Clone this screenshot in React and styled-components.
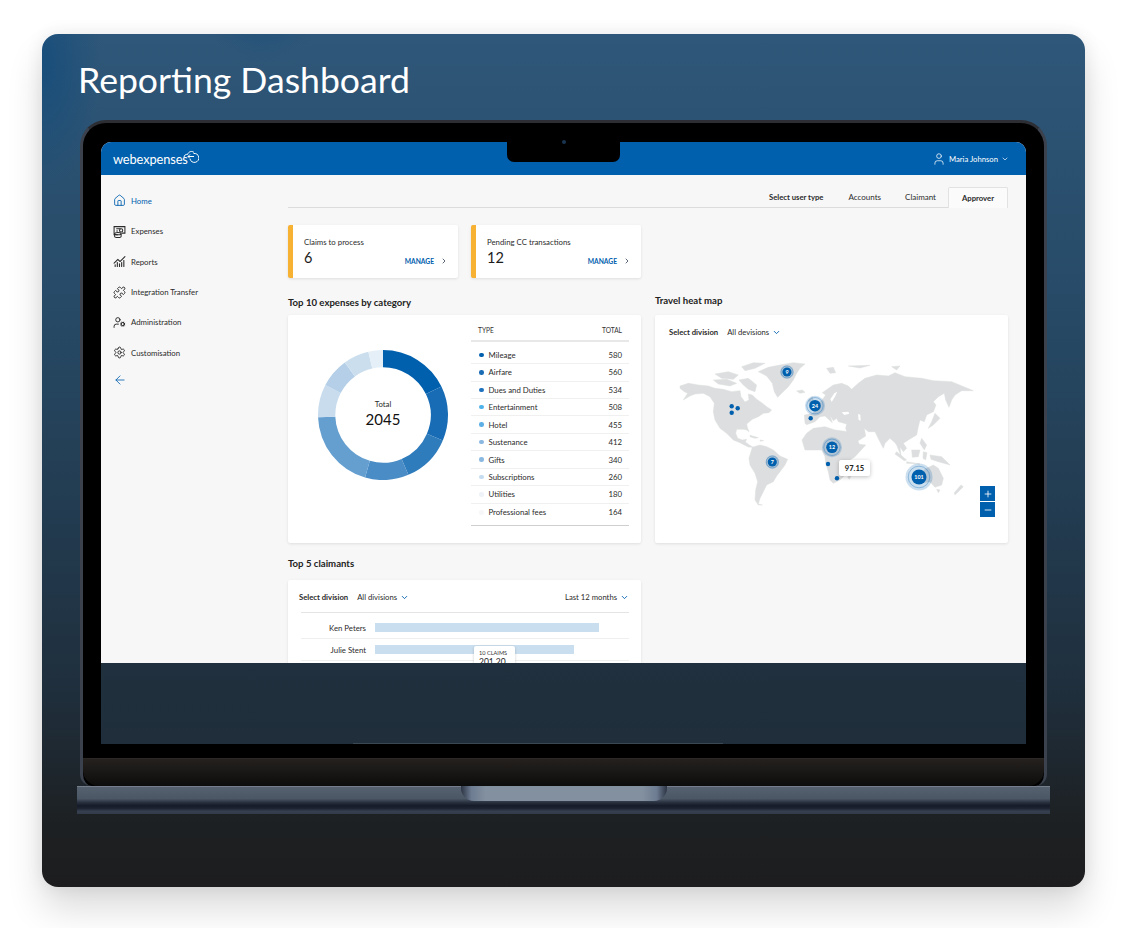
import React from "react";
import styled, { createGlobalStyle } from "styled-components";
import { House, Puzzle, UserCog, Settings, ChartNoAxesCombined, ArrowLeft, User, ChevronDown, ChevronRight, Plus, Minus } from "lucide-react";

const Global = createGlobalStyle`
  html, body { margin: 0; padding: 0; background: #fff; }
  body { font-family: "Lato", "Liberation Sans", sans-serif; color: #1c1c1c; }
  * { box-sizing: border-box; }
`;

const Page = styled.div`
  width: 1126px;
  height: 928px;
  padding: 34px 41px 0 42px;
  overflow: hidden;
`;
const Card = styled.section`
  width: 1043px;
  height: 853px;
  border-radius: 16px;
  padding: 25px 0 0 35px;
  background:
    radial-gradient(circle 60px at 220px -30px, rgba(20, 75, 125, 0.55), rgba(20, 75, 125, 0) 100%),
    radial-gradient(ellipse 60px 130px at 0 30px, rgba(15, 75, 125, 0.7), rgba(15, 75, 125, 0) 100%),
    linear-gradient(180deg, #2f5779 0%, #274b68 30%, #213648 65%, #1f2e3b 78%, #1d2022 93%, #1d1d1f 100%);
  box-shadow: 0 22px 36px rgba(0, 0, 0, 0.14), 0 0 18px rgba(0, 0, 0, 0.08);
`;
const Title = styled.h1`
  margin: 0 0 19px 1px;
  font-size: 35.6px;
  line-height: 42px;
  font-weight: 400;
  color: #fff;
`;
const Lid = styled.div`
  width: 967px;
  margin-left: 3px;
  height: 666px;
  background: #000;
  border: 3px solid #2c2e33;
  border-bottom: 0;
  border-radius: 26px 26px 12px 12px;
  border-left-color: #3b424e;
  border-right-color: #3b424e;
  overflow: hidden;
  position: relative;
`;
const Bezel = styled.div`
  padding: 19px 18px 14px;
`;
const Screen = styled.div`
  height: 602px;
  display: flex;
  flex-direction: column;
  background: linear-gradient(180deg, #20303e 85%, #1f2e3a 100%);
  border-radius: 10px 10px 0 0;
  overflow: hidden;
`;
const ScreenFoot = styled.div`
  flex: 1;
  display: flex;
  justify-content: center;
  align-items: flex-end;
`;
const ScreenLine = styled.div`
  width: 370px;
  height: 1px;
  margin-right: 52px;
  background: #3a4854;
`;
const Chin = styled.div`
  height: 28px;
  border-top: 1px solid #2a2725;
  border-radius: 0 0 16px 16px;
  background: linear-gradient(180deg, #24211f 0%, #191715 50%, #0c0c0c 100%);
`;
const Base = styled.div`
  width: 973px;
  height: 28px;
  display: flex;
  justify-content: center;
  background: linear-gradient(180deg, #8c95a2 0, #566170 4%, #4c5766 45%, #2a3240 58%, #161b29 70%, #1d2331 80%, #363f4f 90%, #333b4a 100%);
`;
const BaseNotch = styled.div`
  width: 206px;
  height: 15px;
  border-radius: 0 0 13px 13px;
  background: linear-gradient(90deg, #2b3443 0, #6e7c92 5%, #82909f 12%, #82909f 88%, #6e7c92 95%, #2b3443 100%);
`;
const Notch = styled.div`
  position: absolute;
  left: 424px;
  top: 0;
  width: 113px;
  height: 39px;
  background: #000;
  border-radius: 0 0 7px 7px;
  display: flex;
  justify-content: center;
  padding-top: 17px;
`;
const Camera = styled.div`
  width: 4px;
  height: 4px;
  border-radius: 50%;
  background: #1a3550;
`;

const AppShell = styled.div`
  height: 521px;
  flex: none;
  background: #f7f7f7;
  overflow: hidden;
  display: flex;
  flex-direction: column;
`;
const Header = styled.header`
  height: 33px;
  flex: none;
  background: #0060ae;
  display: flex;
  align-items: center;
  justify-content: space-between;
  padding: 0 17px 0 12px;
`;
const Logo = styled.div`
  display: flex;
  align-items: center;
  color: #fff;
  font-size: 12.8px;
  letter-spacing: -0.1px;
`;
const LogoMark = styled.svg`
  margin: -4px 0 0 -5px;
`;
const UserBox = styled.div`
  display: flex;
  align-items: center;
  gap: 3px;
  color: #fff;
  font-size: 7.7px;
`;
const Body = styled.div`
  display: flex;
  flex: 1;
`;
const Sidebar = styled.nav`
  width: 187px;
  flex: none;
  padding: 10.7px 0 0 12px;
`;
const NavItem = styled.div`
  height: 30.4px;
  display: flex;
  align-items: center;
  gap: 5px;
  font-size: 7.8px;
  color: ${(p) => (p.$active ? "#0060ae" : "#2b2b2b")};
`;
const BackArrow = styled.div`
  margin-top: 6px;
  height: 12px;
  color: #0060ae;
  display: flex;
  align-items: center;
`;
const Main = styled.main`
  width: 720px;
  padding-top: 12px;
`;
const Tabs = styled.div`
  height: 21px;
  display: flex;
  justify-content: flex-end;
  align-items: stretch;
  border-bottom: 1px solid #dcdcdc;
`;
const TabLabel = styled.div`
  display: flex;
  align-items: center;
  margin-right: ${(p) => p.$gap}px;
  font-weight: ${(p) => (p.$strong ? 700 : 400)};
  font-size: ${(p) => (p.$strong ? "7.7px" : "8px")};
  color: #2b2b2b;
`;
const ActiveTab = styled.div`
  width: 60px;
  height: 21px;
  background: #fbfbfb;
  border: 1px solid #e2e2e2;
  border-bottom: 0;
  border-radius: 2px 2px 0 0;
  display: flex;
  align-items: center;
  justify-content: center;
  font-size: 7.7px;
  font-weight: 700;
  color: #2b2b2b;
`;
const StatRow = styled.div`
  display: flex;
  gap: 13px;
  margin-top: 17px;
`;
const StatCard = styled.div`
  width: 170px;
  height: 53px;
  background: #fff;
  border-left: 5px solid #f7b233;
  border-radius: 2px;
  padding: 12px 10px 0 11px;
  box-shadow: 0 1px 3px rgba(0, 0, 0, 0.1);
`;
const StatLabel = styled.div`
  font-size: 7.8px;
  line-height: 10px;
  color: #2b2b2b;
`;
const StatFoot = styled.div`
  margin-top: 3px;
  display: flex;
  justify-content: space-between;
  align-items: center;
`;
const StatValue = styled.div`
  font-size: 14.5px;
  line-height: 16px;
  color: #1c1c1c;
`;
const Manage = styled.div`
  display: flex;
  align-items: center;
  gap: 6px;
  color: #0060ae;
  font-size: 6.7px;
  font-weight: 700;
  margin-top: 6px;
`;
const ManageChevron = styled(ChevronRight)`
  color: #1f2f45;
`;
const Columns = styled.div`
  display: grid;
  grid-template-columns: 353px 353px;
  gap: 14px;
  margin-top: 19px;
`;
const Heading = styled.h2`
  margin: ${(p) => (p.$raised ? "-2px 0 8px" : "0 0 6px")};
  font-size: 9.6px;
  line-height: 12px;
  font-weight: 700;
  color: #222;
`;
const ClaimHeading = styled(Heading)`
  margin: 15px 0 10px;
`;
const Panel = styled.div`
  position: relative;
  width: 353px;
  height: 228px;
  background: #fff;
  border-radius: 2px;
  box-shadow: 0 1px 3px rgba(0, 0, 0, 0.1);
`;
const ExpensePanel = styled(Panel)`
  display: flex;
  align-items: flex-start;
  padding-left: 30px;
`;
const MapPanel = styled(Panel)`
  padding-top: 12px;
`;
const DonutWrap = styled.div`
  position: relative;
  width: 130px;
  height: 130px;
  margin-top: 35px;
  flex: none;
`;
const DonutLabel = styled.div`
  position: absolute;
  inset: 0 0 4px;
  display: flex;
  flex-direction: column;
  align-items: center;
  justify-content: center;
  font-size: 7.8px;
  line-height: 11px;
  color: #2b2b2b;
`;
const DonutTotal = styled.div`
  font-size: 15px;
  line-height: 18px;
  color: #111;
`;
const Table = styled.div`
  width: 158px;
  margin: 5px 0 0 23px;
  padding-bottom: 4px;
  border-bottom: 1px solid #cfcfcf;
`;
const TableHead = styled.div`
  height: 22px;
  display: flex;
  justify-content: space-between;
  align-items: center;
  padding: 0 7px;
  border-bottom: 2px solid #e8e8e8;
  font-size: 6.6px;
  color: #333;
  margin-bottom: 4.7px;
`;
const Row = styled.div`
  height: 17.45px;
  display: flex;
  align-items: center;
  padding: 0 7px 0 8px;
  font-size: 7.8px;
  color: #2b2b2b;
  border-bottom: ${(p) => (p.$last ? "0" : "1px solid #f0f0f0")};
`;
const Dot = styled.span`
  width: 4.5px;
  height: 4.5px;
  border-radius: 50%;
  background: ${(p) => p.$c};
  margin-right: 5px;
  flex: none;
`;
const RowName = styled.span`
  flex: 1;
`;
const FilterRow = styled.div`
  height: 10px;
  display: flex;
  align-items: center;
  font-size: 7.7px;
  color: #2b2b2b;
`;
const MapFilter = styled(FilterRow)`
  margin: 0 0 13px 14px;
`;
const FilterLabel = styled.span`
  font-weight: 700;
  margin-right: 9px;
`;
const Chevron = styled(ChevronDown)`
  color: #0060ae;
  margin-left: 3px;
`;
const MapSvg = styled.svg`
  display: block;
  margin-left: 10px;
`;
const MapTip = styled.div`
  position: absolute;
  left: 184px;
  top: 145px;
  width: 31px;
  height: 16px;
  background: #fff;
  border-radius: 2px;
  box-shadow: 0 1px 4px rgba(0, 0, 0, 0.25);
  display: flex;
  align-items: center;
  justify-content: center;
  font-size: 7.6px;
  font-weight: 700;
  color: #222;
`;
const ZoomStack = styled.div`
  position: absolute;
  right: 13px;
  top: 171px;
  display: flex;
  flex-direction: column;
  gap: 1px;
`;
const ZoomButton = styled.div`
  width: 15px;
  height: 15px;
  background: #0060ae;
  color: #fff;
  display: flex;
  align-items: center;
  justify-content: center;
`;
const ClaimPanel = styled(Panel)`
  height: 200px;
  padding: 12px 12px 0 11px;
`;
const ClaimFilter = styled(FilterRow)`
  justify-content: space-between;
`;
const FilterGroup = styled.div`
  display: flex;
  align-items: center;
`;
const ClaimRows = styled.div`
  margin: 10px 0 0 2px;
  border-top: 1px solid #e4e4e4;
  padding-top: 4px;
`;
const ClaimRow = styled.div`
  height: 22px;
  display: flex;
  align-items: center;
  border-bottom: 1px solid #efefef;
`;
const ClaimName = styled.div`
  width: 65px;
  margin-right: 9px;
  text-align: right;
  font-size: 7.8px;
  color: #2b2b2b;
`;
const Bar = styled.div`
  width: ${(p) => p.$w}px;
  height: 9px;
  background: #c9deee;
`;
const BarTip = styled.div`
  position: absolute;
  left: 186px;
  top: 66px;
  width: 41px;
  height: 42px;
  background: #fff;
  border-radius: 2px;
  padding: 3px 5px;
  box-shadow: 0 1px 3px rgba(0, 0, 0, 0.2);
`;
const TipSmall = styled.div`
  font-size: 5.6px;
  line-height: 8px;
  color: #333;
`;
const TipValue = styled.div`
  font-size: 8.5px;
  line-height: 10px;
  color: #222;
`;

const slices = [
  [0, 64, "#0060ae"],
  [64, 113, "#176cb5"],
  [113, 157, "#2f7cbd"],
  [157, 196, "#4a8cc6"],
  [196, 268, "#659fd0"],
  [268, 297.5, "#c8dcee"],
  [297.5, 324, "#b4cfe7"],
  [324, 347, "#cbdeee"],
  [347, 360, "#e4eff7"],
];
function arc(a0, a1, R = 65, r = 47.7, c = 65) {
  const p = (a, q) => {
    const t = ((a - 90) * Math.PI) / 180;
    return `${(c + q * Math.cos(t)).toFixed(2)} ${(c + q * Math.sin(t)).toFixed(2)}`;
  };
  const big = a1 - a0 > 180 ? 1 : 0;
  return `M${p(a0, R)} A${R} ${R} 0 ${big} 1 ${p(a1, R)} L${p(a1, r)} A${r} ${r} 0 ${big} 0 ${p(a0, r)} Z`;
}

const rows = [
  ["Mileage", 580, "#0060ae"],
  ["Airfare", 560, "#1a6cb5"],
  ["Dues and Duties", 534, "#1f72bd"],
  ["Entertainment", 508, "#4fb3ea"],
  ["Hotel", 455, "#5cb0e5"],
  ["Sustenance", 412, "#8ab8e0"],
  ["Gifts", 340, "#8ab8e0"],
  ["Subscriptions", 260, "#c5dcf0"],
  ["Utilities", 180, "#eef3f9"],
  ["Professional fees", 164, "#f6f7f9"],
];

const ExpenseIcon = () => (
  <svg width="13" height="13" viewBox="0 0 24 24" fill="none" stroke="currentColor" strokeWidth="1.9">
    <path d="M9 18H2V3h20v12h-6" />
    <path d="M6 7h8M6 11h3" />
    <circle cx="15" cy="10" r="3" />
    <ellipse cx="9" cy="16" rx="6" ry="2.2" />
    <path d="M3 16v5c0 1.2 2.7 2.2 6 2.2s6-1 6-2.2v-5" />
  </svg>
);
const nav = [
  ["Home", <House key="h" size={13} strokeWidth={1.6} />, true],
  ["Expenses", <ExpenseIcon key="e" />],
  ["Reports", <ChartNoAxesCombined key="r" size={13} strokeWidth={2} />],
  ["Integration Transfer", <Puzzle key="i" size={13} strokeWidth={1.8} />],
  ["Administration", <UserCog key="a" size={13} strokeWidth={1.8} />],
  ["Customisation", <Settings key="c" size={13} strokeWidth={1.8} />],
];

const land = "#dddedf";
const West = () => (
  <g transform="translate(665 350) scale(0.3333)" fill={land} stroke={land} strokeWidth="1.5" strokeLinejoin="round">
    <path d="M45,108 L70,100 L100,105 L130,108 L150,115 L175,118 L200,125 L225,122 L228,140 L240,156 L252,150 L250,132 L262,135 L275,148 L290,158 L305,170 L320,180 L312,188 L295,190 L280,200 L262,208 L245,222 L247,232 L252,245 L245,240 L235,238 L215,238 L212,250 L218,265 L232,270 L245,268 L241,276 L252,284 L264,292 L250,291 L225,278 L205,270 L185,250 L165,235 L150,210 L145,185 L148,160 L135,140 L115,130 L90,132 L75,138 L55,150 L68,130 L58,125 L45,115 Z" />
    <path d="M255,256 L280,263 L270,265 L255,260 Z M285,270 L296,272 L286,274 Z" />
    <path d="M262,292 L285,285 L305,290 L325,300 L345,318 L368,328 L360,345 L345,365 L335,378 L325,395 L305,405 L295,425 L285,445 L280,462 L292,465 L280,465 L270,450 L272,420 L278,395 L270,370 L255,345 L252,325 L258,305 Z" />
    <path d="M280,65 L310,52 L345,45 L385,38 L420,42 L405,55 L395,70 L385,90 L370,110 L350,130 L338,142 L328,125 L322,100 L305,78 Z" />
    <path d="M150,72 L190,65 L220,75 L205,88 L170,85 Z M230,50 L265,38 L300,40 L270,55 L240,62 Z M145,90 L185,88 L215,100 L195,108 L160,102 Z M222,90 L250,85 L275,105 L270,125 L250,118 L235,105 Z M395,123 L412,120 L420,127 L405,130 Z" />
    <path d="M430,150 L442,140 L448,165 L436,172 Z" />
  </g>
);
const East = () => (
  <g transform="translate(805 350) scale(0.3333)">
    <g fill={land} stroke={land} strokeWidth="1.5" strokeLinejoin="round">
      <path d="M-9,270 L5,250 L25,235 L60,230 L90,240 L130,245 L150,255 L163,283 L182,285 L150,320 L135,330 L130,345 L125,370 L105,390 L85,400 L75,390 L70,365 L62,340 L60,320 L50,300 L25,300 L0,300 Z" />
      <path d="M138,362 L143,368 L133,388 L128,382 Z" />
      <path d="M0,220 L-2,195 L25,190 L30,170 L50,152 L62,135 L52,128 L85,105 L110,100 L130,108 L140,118 L160,100 L180,85 L215,75 L250,78 L270,68 L300,80 L350,85 L385,92 L440,95 L505,122 L470,122 L450,135 L440,150 L432,172 L422,150 L418,130 L400,140 L385,155 L393,165 L385,185 L365,195 L358,215 L345,210 L340,230 L335,255 L310,270 L295,280 L305,295 L295,305 L285,290 L288,318 L275,285 L270,278 L255,265 L240,280 L235,295 L222,270 L210,245 L190,245 L178,235 L182,258 L140,285 L122,235 L125,222 L100,215 L95,205 L85,212 L75,195 L82,218 L60,198 L45,200 L30,215 L5,224 Z" />
      <path d="M390,190 L405,205 L385,225 L370,235 L380,215 Z" />
      <path d="M275,305 L305,330 L298,332 L270,312 Z M320,300 L345,300 L340,320 L322,322 Z M305,335 L345,342 L305,340 Z M355,305 L366,308 L362,330 L354,325 Z M375,315 L410,320 L435,345 L400,335 L378,328 Z M350,265 L365,285 L358,300 L345,280 Z" />
      <path d="M345,370 L365,355 L385,345 L400,355 L415,385 L410,405 L390,412 L375,395 L340,400 L325,398 L325,380 Z M395,418 L405,420 L400,428 Z M468,405 L475,410 L450,435 L448,428 Z" />
      <path d="M65,55 L85,52 L92,68 L75,70 Z M130,48 L195,46 L165,54 Z M260,50 L285,48 L275,60 Z" />
    </g>
    <g fill="#fff">
      <path d="M76,148 L88,130 L97,125 L90,140 L80,156 Z" />
      <path d="M110,187 L130,185 L133,191 L118,195 Z" />
      <path d="M159,192 L166,194 L167,212 L161,210 Z" />
    </g>
  </g>
);
const pins = [
  [787, 372, 4.6, 6.8, "9"],
  [815, 405.7, 5.8, 10, "24"],
  [832, 447.3, 5.8, 10, "12"],
  [772.3, 462, 4.6, 6.8, "7"],
  [919, 477, 7.5, 13.5, "101"],
];
const dots = [[731.7, 406.3], [737.7, 408.3], [731.7, 412.7], [810.7, 418.3], [828, 464], [837, 478.3]];

const Pin = ({ x, y, r, R, label }) => (
  <g>
    <circle cx={x} cy={y} r={R} fill="#0060ae" opacity="0.2" />
    <circle cx={x} cy={y} r={(R + r) / 2 + 0.3} fill="none" stroke="#0060ae" strokeWidth="0.7" opacity="0.45" />
    <circle cx={x} cy={y} r={r} fill="#0060ae" />
    <text x={x} y={y + 1.9} textAnchor="middle" fontSize="5.4" fontWeight="700" fill="#fff" fontFamily="Lato, sans-serif">{label}</text>
  </g>
);

export default function App() {
  return (
    <Page>
      <Global />
      <Card>
        <Title>Reporting Dashboard</Title>
        <Lid>
          <Notch><Camera /></Notch>
          <Bezel>
            <Screen>
              <AppShell>
                <Header>
                  <Logo>
                    webexpenses
                    <LogoMark width="16" height="13" viewBox="0 0 32 26" fill="none" stroke="#fff" strokeWidth="2">
                      <path d="M2 15 C2 10 6 8 9 9 C11 3 18 1 22 5" />
                      <path d="M21 7 A9 9 0 1 1 14 18" />
                      <path d="M10 13 L22 13 M14 9 L10 13 L14 17" />
                    </LogoMark>
                  </Logo>
                  <UserBox>
                    <User size={14} strokeWidth={1.3} />
                    <span>Maria Johnson</span>
                    <ChevronDown size={8} strokeWidth={2} />
                  </UserBox>
                </Header>
                <Body>
                  <Sidebar>
                    {nav.map(([label, icon, active]) => (
                      <NavItem key={label} $active={active}>{icon}<span>{label}</span></NavItem>
                    ))}
                    <BackArrow><ArrowLeft size={14} strokeWidth={1.4} /></BackArrow>
                  </Sidebar>
                  <Main>
                    <Tabs>
                      <TabLabel $strong $gap={25}>Select user type</TabLabel>
                      <TabLabel $gap={24}>Accounts</TabLabel>
                      <TabLabel $gap={12}>Claimant</TabLabel>
                      <ActiveTab>Approver</ActiveTab>
                    </Tabs>
                    <StatRow>
                      <StatCard>
                        <StatLabel>Claims to process</StatLabel>
                        <StatFoot><StatValue>6</StatValue><Manage>MANAGE <ManageChevron size={8} strokeWidth={2.2} /></Manage></StatFoot>
                      </StatCard>
                      <StatCard>
                        <StatLabel>Pending CC transactions</StatLabel>
                        <StatFoot><StatValue>12</StatValue><Manage>MANAGE <ManageChevron size={8} strokeWidth={2.2} /></Manage></StatFoot>
                      </StatCard>
                    </StatRow>
                    <Columns>
                      <div>
                        <Heading>Top 10 expenses by category</Heading>
                        <ExpensePanel>
                          <DonutWrap>
                            <svg width="130" height="130" viewBox="0 0 130 130">
                              {slices.map(([a, b, c]) => <path key={a} d={arc(a, b)} fill={c} />)}
                            </svg>
                            <DonutLabel>
                              <span>Total</span>
                              <DonutTotal>2045</DonutTotal>
                            </DonutLabel>
                          </DonutWrap>
                          <Table>
                            <TableHead><span>TYPE</span><span>TOTAL</span></TableHead>
                            {rows.map(([n, v, c], i) => (
                              <Row key={n} $last={i === rows.length - 1}>
                                <Dot $c={c} /><RowName>{n}</RowName><span>{v}</span>
                              </Row>
                            ))}
                          </Table>
                        </ExpensePanel>
                      </div>
                      <div>
                        <Heading $raised>Travel heat map</Heading>
                        <MapPanel>
                          <MapFilter>
                            <FilterLabel>Select division</FilterLabel>
                            <span>All devisions</span>
                            <Chevron size={9} strokeWidth={2.4} />
                          </MapFilter>
                          <MapSvg width="340" height="170" viewBox="665 350 340 170">
                            <West />
                            <East />
                            {pins.map(([x, y, r, R, l]) => <Pin key={l} x={x} y={y} r={r} R={R} label={l} />)}
                            {dots.map(([x, y]) => <circle key={x + "-" + y} cx={x} cy={y} r="2.2" fill="#0060ae" />)}
                          </MapSvg>
                          <MapTip>97.15</MapTip>
                          <ZoomStack>
                            <ZoomButton><Plus size={10} strokeWidth={2} /></ZoomButton>
                            <ZoomButton><Minus size={10} strokeWidth={2} /></ZoomButton>
                          </ZoomStack>
                        </MapPanel>
                      </div>
                    </Columns>
                    <ClaimHeading>Top 5 claimants</ClaimHeading>
                    <ClaimPanel>
                      <ClaimFilter>
                        <FilterGroup>
                          <FilterLabel>Select division</FilterLabel>
                          <span>All divisions</span>
                          <Chevron size={9} strokeWidth={2.4} />
                        </FilterGroup>
                        <FilterGroup>
                          <span>Last 12 months</span>
                          <Chevron size={9} strokeWidth={2.4} />
                        </FilterGroup>
                      </ClaimFilter>
                      <ClaimRows>
                        <ClaimRow><ClaimName>Ken Peters</ClaimName><Bar $w={224} /></ClaimRow>
                        <ClaimRow><ClaimName>Julie Stent</ClaimName><Bar $w={199} /></ClaimRow>
                      </ClaimRows>
                      <BarTip>
                        <TipSmall>10 CLAIMS</TipSmall>
                        <TipValue>201.20</TipValue>
                      </BarTip>
                    </ClaimPanel>
                  </Main>
                </Body>
              </AppShell>
              <ScreenFoot><ScreenLine /></ScreenFoot>
            </Screen>
          </Bezel>
          <Chin />
        </Lid>
        <Base><BaseNotch /></Base>
      </Card>
    </Page>
  );
}
